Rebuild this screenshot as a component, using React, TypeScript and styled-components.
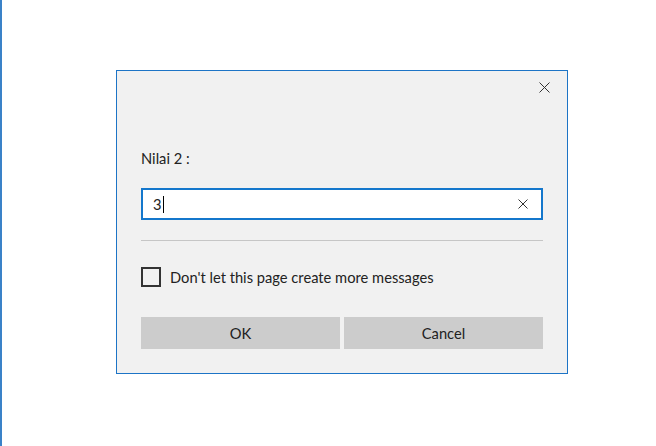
import React from "react";
import styled, { createGlobalStyle } from "styled-components";

const Global = createGlobalStyle`
  html, body { margin: 0; padding: 0; background: #ffffff; }
  body { font-family: "Lato", "Noto Sans", "Liberation Sans", sans-serif; }
  * { box-sizing: border-box; }
`;

const Page = styled.div`
  width: 656px;
  height: 446px;
  border-left: 2px solid #3a82c8;
  padding: 70px 0 0 114px;
  background: #ffffff;
`;

const Dialog = styled.div`
  width: 452px;
  height: 304px;
  border: 1px solid #1d74c6;
  background: #f1f1f1;
  display: flex;
  flex-direction: column;
  padding: 0 24px 24px 24px;
`;

const Header = styled.div`
  height: 32px;
  display: flex;
  justify-content: flex-end;
  margin-right: -17px;
`;

const CloseButton = styled.button`
  width: 32px;
  height: 32px;
  border: none;
  background: transparent;
  padding: 0;
  display: flex;
  align-items: center;
  justify-content: center;
  color: #333;
`;

const Label = styled.div`
  margin-top: 45px;
  height: 20px;
  line-height: 20px;
  font-size: 14.7px;
  color: #222222;
`;

const InputBox = styled.div`
  margin-top: 20px;
  height: 32px;
  border: 2px solid #1477cc;
  background: #ffffff;
  display: flex;
  align-items: center;
  padding: 0 8px 0 10px;
`;

const Value = styled.span`
  font-size: 14.7px;
  color: #222222;
  line-height: 20px;
`;

const Caret = styled.span`
  display: inline-block;
  width: 1px;
  height: 17px;
  background: #000;
  margin-left: 1px;
`;

const Spacer = styled.div`
  flex: 1;
`;

const ClearIcon = styled.span`
  display: flex;
  width: 16px;
  height: 16px;
  align-items: center;
  justify-content: center;
  margin-right: 2px;
`;

const Separator = styled.div`
  margin-top: 20px;
  height: 1px;
  background: #c6c6c6;
`;

const CheckRow = styled.label`
  margin-top: 26px;
  height: 20px;
  display: flex;
  align-items: center;
  gap: 9px;
  font-size: 14.7px;
  color: #222222;
`;

const Box = styled.span`
  width: 20px;
  height: 20px;
  border: 2px solid #333333;
  background: transparent;
  flex: none;
`;

const Buttons = styled.div`
  margin-top: 30px;
  display: grid;
  grid-template-columns: 1fr 1fr;
  gap: 4px;
`;

const Button = styled.button`
  height: 32px;
  border: none;
  background: #cccccc;
  font-family: inherit;
  font-size: 14.7px;
  color: #222222;
  padding: 0;
`;

export default function App() {
  return (
    <>
      <Global />
      <Page>
        <Dialog>
          <Header>
            <CloseButton aria-label="Close">
              <svg width="11" height="11" viewBox="0 0 11 11">
                <path d="M0.5 0.5 L10.5 10.5 M10.5 0.5 L0.5 10.5" stroke="#333" strokeWidth="1" fill="none" />
              </svg>
            </CloseButton>
          </Header>
          <Label>Nilai 2 :</Label>
          <InputBox>
            <Value>3</Value>
            <Caret />
            <Spacer />
            <ClearIcon>
              <svg width="10" height="10" viewBox="0 0 10 10">
                <path d="M0.5 0.5 L9.5 9.5 M9.5 0.5 L0.5 9.5" stroke="#333" strokeWidth="1" fill="none" />
              </svg>
            </ClearIcon>
          </InputBox>
          <Separator />
          <CheckRow>
            <Box />
            Don't let this page create more messages
          </CheckRow>
          <Buttons>
            <Button>OK</Button>
            <Button>Cancel</Button>
          </Buttons>
        </Dialog>
      </Page>
    </>
  );
}
